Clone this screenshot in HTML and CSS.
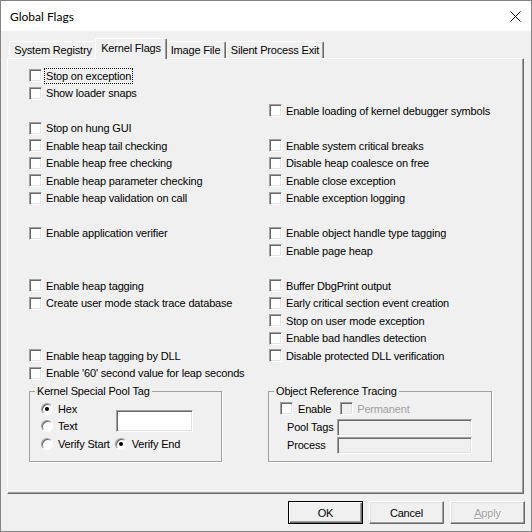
FILE: index.html
```html
<!DOCTYPE html>
<html>
<head>
<meta charset="utf-8">
<title>Global Flags</title>
<link rel="stylesheet" href="styles.css">
</head>
<body>
<div class="window">
  <div class="titlebar">
    <span class="title">Global Flags</span>
    <svg class="close" width="11" height="11" viewBox="0 0 11 11"><path d="M0.5 0.5L10.5 10.5M10.5 0.5L0.5 10.5" stroke="#000" stroke-width="1" fill="none"/></svg>
  </div>
  <div class="content">
    <div class="tabs">
      <div class="tab t1">System Registry</div>
      <div class="tab t2 selected">Kernel Flags</div>
      <div class="tab t3">Image File</div>
      <div class="tab t4">Silent Process Exit</div>
    </div>
    <div class="panel">
      <div class="flags">
        <div class="item"><span class="cb"></span><span class="focus">Stop on exception</span></div><div></div>
        <div class="item"><span class="cb"></span><span>Show loader snaps</span></div><div></div>
        <div></div><div class="item"><span class="cb"></span><span>Enable loading of kernel debugger symbols</span></div>
        <div class="item"><span class="cb"></span><span>Stop on hung GUI</span></div><div></div>
        <div class="item"><span class="cb"></span><span>Enable heap tail checking</span></div><div class="item"><span class="cb"></span><span>Enable system critical breaks</span></div>
        <div class="item"><span class="cb"></span><span>Enable heap free checking</span></div><div class="item"><span class="cb"></span><span>Disable heap coalesce on free</span></div>
        <div class="item"><span class="cb"></span><span>Enable heap parameter checking</span></div><div class="item"><span class="cb"></span><span>Enable close exception</span></div>
        <div class="item"><span class="cb"></span><span>Enable heap validation on call</span></div><div class="item"><span class="cb"></span><span>Enable exception logging</span></div>
        <div></div><div></div>
        <div class="item"><span class="cb"></span><span>Enable application verifier</span></div><div class="item"><span class="cb"></span><span>Enable object handle type tagging</span></div>
        <div></div><div class="item"><span class="cb"></span><span>Enable page heap</span></div>
        <div></div><div></div>
        <div class="item"><span class="cb"></span><span>Enable heap tagging</span></div><div class="item"><span class="cb"></span><span>Buffer DbgPrint output</span></div>
        <div class="item"><span class="cb"></span><span>Create user mode stack trace database</span></div><div class="item"><span class="cb"></span><span>Early critical section event creation</span></div>
        <div></div><div class="item"><span class="cb"></span><span>Stop on user mode exception</span></div>
        <div></div><div class="item"><span class="cb"></span><span>Enable bad handles detection</span></div>
        <div class="item"><span class="cb"></span><span>Enable heap tagging by DLL</span></div><div class="item"><span class="cb"></span><span>Disable protected DLL verification</span></div>
        <div class="item"><span class="cb"></span><span>Enable '60' second value for leap seconds</span></div><div></div>
      </div>
      <div class="groups">
        <fieldset class="group pool">
          <legend>Kernel Special Pool Tag</legend>
          <div class="pool-grid">
            <div class="item"><span class="radio checked"></span><span>Hex</span></div>
            <div class="textbox"></div>
            <div class="item"><span class="radio"></span><span>Text</span></div>
            <div class="verify">
              <div class="item"><span class="radio"></span><span>Verify Start</span></div>
              <div class="item"><span class="radio checked"></span><span>Verify End</span></div>
            </div>
          </div>
        </fieldset>
        <fieldset class="group tracing">
          <legend>Object Reference Tracing</legend>
          <div class="enable-row">
            <div class="item wide"><span class="cb"></span><span>Enable</span></div>
            <div class="item disabled"><span class="cb"></span><span>Permanent</span></div>
          </div>
          <div class="fields">
            <span class="label">Pool Tags</span><div class="textbox off"></div>
            <span class="label">Process</span><div class="textbox off"></div>
          </div>
        </fieldset>
      </div>
    </div>
    <div class="buttons">
      <div class="btn default">OK</div>
      <div class="btn">Cancel</div>
      <div class="btn disabled"><span class="u">A</span>pply</div>
    </div>
  </div>
</div>
</body>
</html>
```
FILE: styles.css
```css
html, body {
  margin: 0;
  padding: 0;
  background: #f0f0f0;
}
body {
  font-family: "Liberation Sans", Arial, sans-serif;
  font-size: 11px;
  letter-spacing: -0.17px;
  color: #000;
}
.window {
  width: 532px;
  height: 532px;
  box-sizing: border-box;
  border: 1px solid #838383;
  background: #f0f0f0;
  display: flex;
  flex-direction: column;
}
.titlebar {
  height: 30px;
  flex: none;
  background: #fff;
  display: flex;
  align-items: center;
  justify-content: space-between;
  padding: 0 10px 0 9px;
}
.title {
  font-family: Lato, "Liberation Sans", sans-serif;
  font-size: 12px;
  letter-spacing: 0;
}
.close {
  display: block;
}
.content {
  padding: 7px 6px 0 6px;
  display: flex;
  flex-direction: column;
}
.tabs {
  height: 20px;
  display: flex;
  align-items: flex-end;
  margin-left: 2px;
}
.tab {
  height: 17px;
  box-sizing: border-box;
  padding-top: 1px;
  line-height: 15px;
  text-align: center;
  border-top: 1px solid #fff;
  border-left: 1px solid #fff;
  border-right: 1px solid #696969;
  box-shadow: inset -1px 0 0 #a0a0a0;
  border-radius: 2px 2px 0 0;
  white-space: nowrap;
}
.t1 { width: 88px; }
.t2 { width: 68px; }
.t3 { width: 61px; }
.t4 { width: 98px; }
.tab.selected {
  height: 21px;
  width: 72px;
  margin: 0 -2px -1px -2px;
  padding-top: 2px;
  background: #f0f0f0;
  position: relative;
  z-index: 1;
}
.panel {
  width: 517px;
  height: 436px;
  box-sizing: border-box;
  border-top: 1px solid #fff;
  border-left: 1px solid #fff;
  border-right: 1px solid #696969;
  border-bottom: 1px solid #696969;
  box-shadow: inset -1px -1px 0 #a0a0a0;
  padding: 8px 0 0 21px;
}
.flags {
  display: grid;
  grid-template-columns: 240px 240px;
  grid-auto-rows: 17.5px;
}
.item {
  display: flex;
  align-items: center;
  gap: 4px;
  white-space: nowrap;
}
.cb {
  width: 13px;
  height: 13px;
  flex: none;
  box-sizing: border-box;
  background: #fff;
  border: 1px solid;
  border-color: #a0a0a0 #fff #fff #a0a0a0;
  box-shadow: inset 1px 1px 0 #696969, inset -1px -1px 0 #e3e3e3;
}
.focus {
  outline: 1px dotted #000;
  padding: 0 1px;
  margin-left: -1px;
  line-height: 14px;
}
.groups {
  display: flex;
  gap: 46px;
  margin-top: 3px;
}
.group {
  margin: 0;
  padding: 0;
  box-sizing: border-box;
  height: 77px;
  border: 1px solid #a0a0a0;
  box-shadow: 1px 1px 0 #fff;
  min-width: 0;
}
.group legend {
  margin-left: 5px;
  padding: 0 2px;
  line-height: 13px;
}
.pool {
  width: 193px;
}
.tracing {
  width: 224px;
}
.pool-grid {
  display: grid;
  grid-template-columns: 75px 77px;
  grid-template-rows: 17.5px 17.5px 17.5px;
  margin: 2px 0 0 11px;
}
.pool-grid .textbox {
  grid-column: 2;
  grid-row: 1 / 3;
  margin-top: 10px;
  height: 22px;
}
.verify {
  grid-column: 1 / 3;
  display: flex;
  gap: 5px;
}
.radio {
  width: 12px;
  height: 12px;
  flex: none;
  box-sizing: border-box;
  border-radius: 50%;
  background: #fff;
  border: 1px solid;
  border-color: #a0a0a0 #fff #fff #a0a0a0;
  box-shadow: inset 1px 1px 0 #696969;
  display: flex;
  align-items: center;
  justify-content: center;
  margin-right: 1px;
}
.radio.checked::after {
  content: "";
  width: 4px;
  height: 4px;
  border-radius: 50%;
  background: #000;
}
.textbox {
  box-sizing: border-box;
  background: #fff;
  border: 1px solid;
  border-color: #a0a0a0 #fff #fff #a0a0a0;
  box-shadow: inset 1px 1px 0 #696969, inset -1px -1px 0 #e3e3e3;
}
.textbox.off {
  background: #f0f0f0;
  height: 17px;
}
.enable-row {
  display: flex;
  height: 17.5px;
  margin: 2px 0 0 11px;
  gap: 9px;
}
.item.wide {
  gap: 5px;
}
.item.disabled {
  color: #a0a0a0;
}
.item.disabled .cb {
  background: #f0f0f0;
}
.fields {
  display: grid;
  grid-template-columns: 50px 135px;
  row-gap: 1px;
  margin: 1px 0 0 18px;
  align-items: center;
}
.buttons {
  display: flex;
  justify-content: flex-end;
  gap: 6px;
  margin-top: 7px;
}
.btn {
  width: 75px;
  height: 23px;
  box-sizing: border-box;
  display: flex;
  align-items: center;
  justify-content: center;
  background: #f0f0f0;
  border: 1px solid;
  border-color: #fff #696969 #696969 #fff;
  box-shadow: inset -1px -1px 0 #a0a0a0, inset 1px 1px 0 #e3e3e3;
}
.btn.default {
  border: 1px solid #000;
  box-shadow: inset 1px 1px 0 #fff, inset -1px -1px 0 #696969, inset -2px -2px 0 #a0a0a0;
}
.btn.disabled {
  color: #a0a0a0;
  text-shadow: 1px 1px 0 #fff;
}
.u {
  text-decoration: underline;
}
```
